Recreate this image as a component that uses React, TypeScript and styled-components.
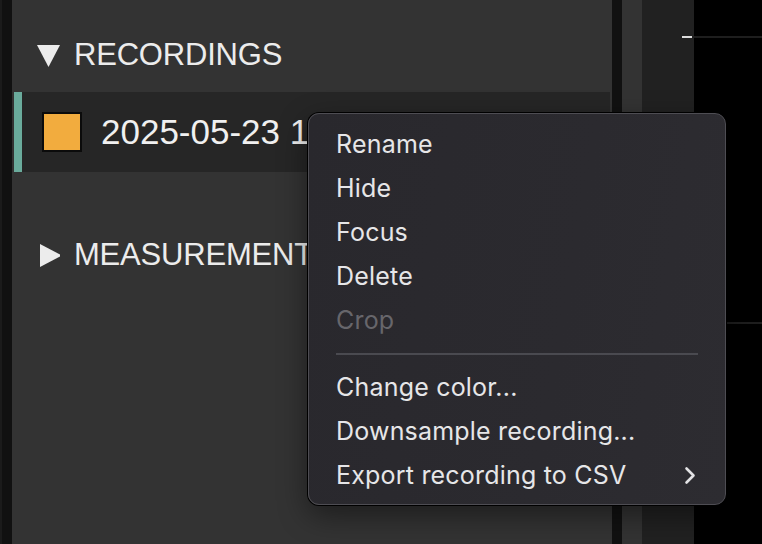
import React from "react";
import styled, { createGlobalStyle } from "styled-components";

const GlobalStyle = createGlobalStyle`
  html, body {
    margin: 0;
    padding: 0;
    background: #000;
    overflow: hidden;
  }
  * {
    box-sizing: border-box;
  }
`;

interface MenuEntry {
    label: string;
    disabled?: boolean;
    submenu?: boolean;
}

const topItems: MenuEntry[] = [
    { label: "Rename" },
    { label: "Hide" },
    { label: "Focus" },
    { label: "Delete" },
    { label: "Crop", disabled: true },
];

const bottomItems: MenuEntry[] = [
    { label: "Change color..." },
    { label: "Downsample recording..." },
    { label: "Export recording to CSV", submenu: true },
];

function Caret({ open }: { open: boolean }) {
    if (open) {
        return (
            <CaretBox>
                <svg width="23" height="23" viewBox="0 0 23 23">
                    <polygon points="0,1 23,1 11.5,23" fill="#ececec" />
                </svg>
            </CaretBox>
        );
    }
    return (
        <CaretBox>
            <svg width="23" height="23" viewBox="0 0 23 23">
                <polygon points="3,0 3,23 25,11.5" fill="#ececec" />
            </svg>
        </CaretBox>
    );
}

function ChevronRight() {
    return (
        <svg width="12" height="19" viewBox="0 0 12 19">
            <polyline
                points="2.5,2.5 9.5,9.5 2.5,16.5"
                fill="none"
                stroke="#e2e2e4"
                strokeWidth="2.6"
                strokeLinecap="round"
                strokeLinejoin="round"
            />
        </svg>
    );
}

export default function App() {
    return (
        <>
            <GlobalStyle />
            <Screen>
                <LeftEdge />
                <Gutter />
                <Sidebar>
                    <SectionHeader $top={35}>
                        <Caret open />
                        <HeaderLabel>RECORDINGS</HeaderLabel>
                    </SectionHeader>
                    <RecordingRow>
                        <Swatch $color="#f2ac3e" />
                        {/* the context menu sits over the rest of the name */}
                        <RowLabel>2025-05-23 11:42:07</RowLabel>
                    </RecordingRow>
                    <SectionHeader $top={63}>
                        <Caret open={false} />
                        <HeaderLabel>MEASUREMENTS</HeaderLabel>
                    </SectionHeader>
                </Sidebar>
                <Gutter />
                <ScrollTrack />
                <AxisColumn>
                    <svg width="52" height="544">
                        <rect x="40" y="36" width="10" height="2" fill="#dcdcdc" />
                    </svg>
                </AxisColumn>
                <Plot>
                    <svg width="68" height="544">
                        <rect x="0" y="36" width="68" height="2" fill="#1e1e1e" />
                        <rect x="0" y="322" width="68" height="2" fill="#1e1e1e" />
                    </svg>
                </Plot>

                <ContextMenu>
                    {topItems.map((item) => (
                        <MenuItem key={item.label} $disabled={item.disabled}>
                            {item.label}
                        </MenuItem>
                    ))}
                    <Separator />
                    {bottomItems.map((item) => (
                        <MenuItem key={item.label}>
                            <span>{item.label}</span>
                            {item.submenu && <ChevronRight />}
                        </MenuItem>
                    ))}
                </ContextMenu>
            </Screen>
        </>
    );
}

const Screen = styled.div`
  position: relative;
  display: flex;
  width: 762px;
  height: 544px;
  overflow: hidden;
  background: #000;
`;

const LeftEdge = styled.div`
  width: 2px;
  flex-shrink: 0;
  background: #1b1b1b;
`;

const Gutter = styled.div`
  width: 10px;
  flex-shrink: 0;
  background: #111111;
`;

const Sidebar = styled.div`
  width: 600px;
  flex-shrink: 0;
  display: flex;
  flex-direction: column;
  background: #333333;
  font-family: "Liberation Sans", Arial, sans-serif;
  color: #ececec;
`;

const SectionHeader = styled.div<{ $top: number }>`
  display: flex;
  align-items: center;
  height: 40px;
  margin-top: ${(p) => p.$top}px;
  padding-left: 25px;
  gap: 14px;
  font-size: 31px;
  line-height: 40px;
  letter-spacing: -0.2px;
`;

const HeaderLabel = styled.span`
  max-width: 234px;
  overflow: hidden;
  white-space: nowrap;
`;

const CaretBox = styled.span`
  display: flex;
  width: 23px;
  height: 23px;
  svg {
    display: block;
  }
`;

const RecordingRow = styled.div`
  display: flex;
  align-items: center;
  height: 80px;
  margin: 17px 2px 0 2px;
  padding-left: 20px;
  background: #262626;
  border-left: 8px solid #6aab9c;
  white-space: nowrap;
  overflow: hidden;
`;

const Swatch = styled.span<{ $color: string }>`
  width: 40px;
  height: 40px;
  flex-shrink: 0;
  background: ${(p) => p.$color};
  border: 2px solid #0b0b0b;
`;

const RowLabel = styled.span`
  margin-left: 19px;
  max-width: 206px;
  overflow: hidden;
  font-size: 35px;
  line-height: 40px;
  color: #f0f0f0;
`;

const ScrollTrack = styled.div`
  width: 20px;
  flex-shrink: 0;
  background: #333333;
`;

const AxisColumn = styled.div`
  width: 52px;
  flex-shrink: 0;
  background: #212121;
  svg {
    display: block;
  }
`;

const Plot = styled.div`
  flex: 1;
  background: #000;
  svg {
    display: block;
  }
`;

const ContextMenu = styled.div`
  position: absolute;
  left: 308px;
  top: 113px;
  width: 418px;
  padding: 8px 0 7px 0;
  display: flex;
  flex-direction: column;
  background: linear-gradient(100deg, #29282d 0%, #2b2a2f 60%, #2d2c31 100%);
  border: 1px solid #4e4d53;
  border-radius: 11px;
  box-shadow: 0 0 0 1px #000, 0 10px 30px rgba(0, 0, 0, 0.45);
  font-family: Inter, "Noto Sans", sans-serif;
  z-index: 10;
`;

const MenuItem = styled.div<{ $disabled?: boolean }>`
  display: flex;
  align-items: center;
  justify-content: space-between;
  height: 44px;
  padding: 0 29px 0 27px;
  font-size: 25px;
  line-height: 44px;
  letter-spacing: 0.2px;
  color: ${(p) => (p.$disabled ? "#67666b" : "#e6e6e8")};
  white-space: nowrap;
`;

const Separator = styled.div`
  height: 2px;
  margin: 11px 27px 10px 27px;
  background: #4a4a50;
`;
